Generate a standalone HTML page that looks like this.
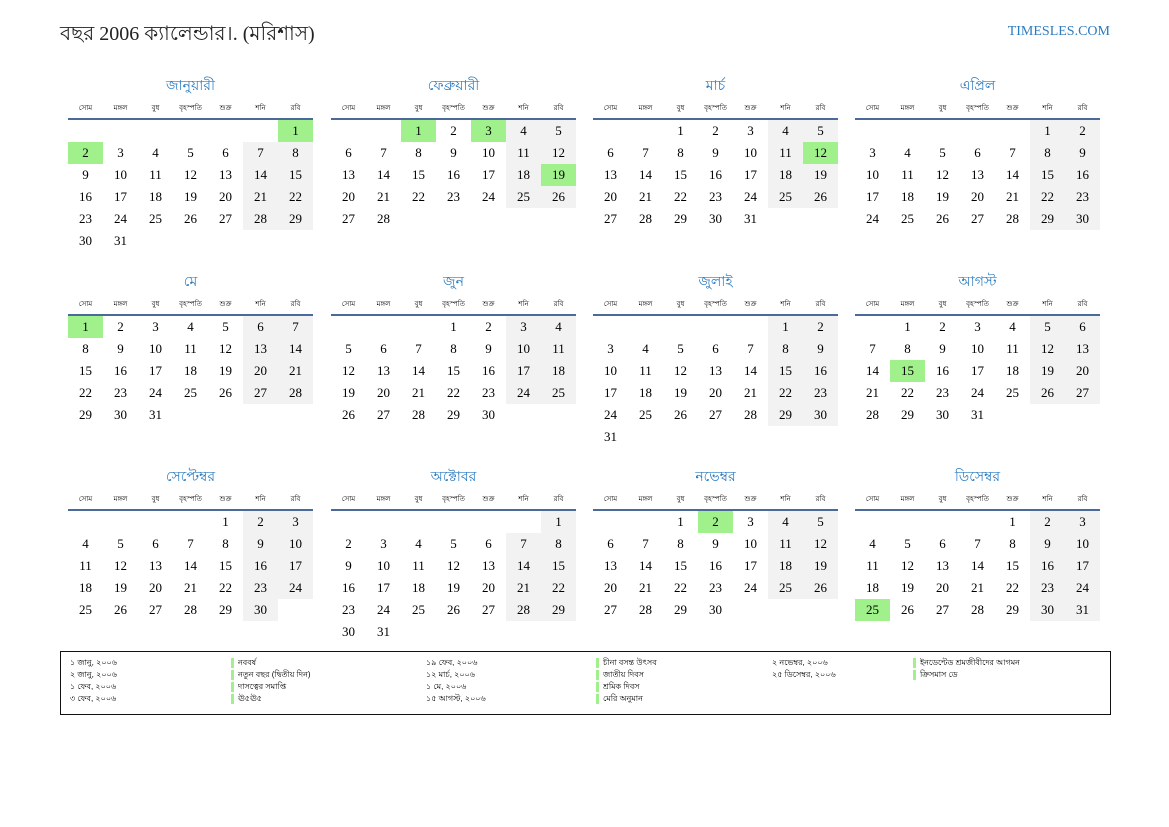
<!DOCTYPE html>
<html><head><meta charset="utf-8">
<style>
*{margin:0;padding:0;box-sizing:border-box}
body{width:1169px;height:827px;background:#fff;position:relative;font-family:"Liberation Serif","Noto Serif CJK SC",serif;color:#000;overflow:hidden}
.t{position:absolute;left:60px;top:19px;font-size:20px;color:#222;font-family:"Liberation Serif","Noto Sans CJK SC",serif}
.site{position:absolute;right:59px;top:24px;font-size:14px;color:#2a7bc0}
.m{position:absolute;width:245px}
.mt{height:25px;text-align:center;color:#2a7bc0;font-size:14px;line-height:28px}
.hd{display:grid;grid-template-columns:repeat(7,35px);height:20px;font-size:7px;text-align:center;line-height:22px;font-family:"Liberation Sans",sans-serif}
.ln{height:2px;background:#4a6a9a}
.g{display:grid;grid-template-columns:repeat(7,35px);grid-auto-rows:22px}
.g i{font-style:normal;text-align:center;line-height:22px;font-size:13px}
.g i:nth-child(7n+6),.g i:nth-child(7n){background:#f2f2f2}
.g i:empty{background:transparent!important}
.g i.h{background:#a0f08c!important}
.lg{position:absolute;left:60px;top:651px;width:1051px;height:64px;border:1.5px solid #111}
.c{position:absolute;top:5px;font-size:8px;line-height:12px;font-family:"Liberation Sans",sans-serif}
.c.n div{border-left:3px solid #a0f08c;padding-left:4px;margin-bottom:2px;line-height:10px}
.c.n{top:6px}
</style></head><body>
<div class="t">বছর 2006 ক্যালেন্ডার।. (মরিশাস)</div>
<div class="site">TIMESLES.COM</div>

<div class="m" style="left:68px;top:73px"><div class="mt">জানুয়ারী</div><div class="hd"><span>সোম</span><span>মঙ্গল</span><span>বুধ</span><span>বৃহস্পতি</span><span>শুক্র</span><span>শনি</span><span>রবি</span></div><div class="ln"></div>
<div class="g"><i></i><i></i><i></i><i></i><i></i><i></i><i class="h">1</i><i class="h">2</i><i>3</i><i>4</i><i>5</i><i>6</i><i>7</i><i>8</i><i>9</i><i>10</i><i>11</i><i>12</i><i>13</i><i>14</i><i>15</i><i>16</i><i>17</i><i>18</i><i>19</i><i>20</i><i>21</i><i>22</i><i>23</i><i>24</i><i>25</i><i>26</i><i>27</i><i>28</i><i>29</i><i>30</i><i>31</i></div></div>

<div class="m" style="left:331px;top:73px"><div class="mt">ফেব্রুয়ারী</div><div class="hd"><span>সোম</span><span>মঙ্গল</span><span>বুধ</span><span>বৃহস্পতি</span><span>শুক্র</span><span>শনি</span><span>রবি</span></div><div class="ln"></div>
<div class="g"><i></i><i></i><i class="h">1</i><i>2</i><i class="h">3</i><i>4</i><i>5</i><i>6</i><i>7</i><i>8</i><i>9</i><i>10</i><i>11</i><i>12</i><i>13</i><i>14</i><i>15</i><i>16</i><i>17</i><i>18</i><i class="h">19</i><i>20</i><i>21</i><i>22</i><i>23</i><i>24</i><i>25</i><i>26</i><i>27</i><i>28</i></div></div>

<div class="m" style="left:593px;top:73px"><div class="mt">মার্চ</div><div class="hd"><span>সোম</span><span>মঙ্গল</span><span>বুধ</span><span>বৃহস্পতি</span><span>শুক্র</span><span>শনি</span><span>রবি</span></div><div class="ln"></div>
<div class="g"><i></i><i></i><i>1</i><i>2</i><i>3</i><i>4</i><i>5</i><i>6</i><i>7</i><i>8</i><i>9</i><i>10</i><i>11</i><i class="h">12</i><i>13</i><i>14</i><i>15</i><i>16</i><i>17</i><i>18</i><i>19</i><i>20</i><i>21</i><i>22</i><i>23</i><i>24</i><i>25</i><i>26</i><i>27</i><i>28</i><i>29</i><i>30</i><i>31</i></div></div>

<div class="m" style="left:855px;top:73px"><div class="mt">এপ্রিল</div><div class="hd"><span>সোম</span><span>মঙ্গল</span><span>বুধ</span><span>বৃহস্পতি</span><span>শুক্র</span><span>শনি</span><span>রবি</span></div><div class="ln"></div>
<div class="g"><i></i><i></i><i></i><i></i><i></i><i>1</i><i>2</i><i>3</i><i>4</i><i>5</i><i>6</i><i>7</i><i>8</i><i>9</i><i>10</i><i>11</i><i>12</i><i>13</i><i>14</i><i>15</i><i>16</i><i>17</i><i>18</i><i>19</i><i>20</i><i>21</i><i>22</i><i>23</i><i>24</i><i>25</i><i>26</i><i>27</i><i>28</i><i>29</i><i>30</i></div></div>

<div class="m" style="left:68px;top:269px"><div class="mt">মে</div><div class="hd"><span>সোম</span><span>মঙ্গল</span><span>বুধ</span><span>বৃহস্পতি</span><span>শুক্র</span><span>শনি</span><span>রবি</span></div><div class="ln"></div>
<div class="g"><i class="h">1</i><i>2</i><i>3</i><i>4</i><i>5</i><i>6</i><i>7</i><i>8</i><i>9</i><i>10</i><i>11</i><i>12</i><i>13</i><i>14</i><i>15</i><i>16</i><i>17</i><i>18</i><i>19</i><i>20</i><i>21</i><i>22</i><i>23</i><i>24</i><i>25</i><i>26</i><i>27</i><i>28</i><i>29</i><i>30</i><i>31</i></div></div>

<div class="m" style="left:331px;top:269px"><div class="mt">জুন</div><div class="hd"><span>সোম</span><span>মঙ্গল</span><span>বুধ</span><span>বৃহস্পতি</span><span>শুক্র</span><span>শনি</span><span>রবি</span></div><div class="ln"></div>
<div class="g"><i></i><i></i><i></i><i>1</i><i>2</i><i>3</i><i>4</i><i>5</i><i>6</i><i>7</i><i>8</i><i>9</i><i>10</i><i>11</i><i>12</i><i>13</i><i>14</i><i>15</i><i>16</i><i>17</i><i>18</i><i>19</i><i>20</i><i>21</i><i>22</i><i>23</i><i>24</i><i>25</i><i>26</i><i>27</i><i>28</i><i>29</i><i>30</i></div></div>

<div class="m" style="left:593px;top:269px"><div class="mt">জুলাই</div><div class="hd"><span>সোম</span><span>মঙ্গল</span><span>বুধ</span><span>বৃহস্পতি</span><span>শুক্র</span><span>শনি</span><span>রবি</span></div><div class="ln"></div>
<div class="g"><i></i><i></i><i></i><i></i><i></i><i>1</i><i>2</i><i>3</i><i>4</i><i>5</i><i>6</i><i>7</i><i>8</i><i>9</i><i>10</i><i>11</i><i>12</i><i>13</i><i>14</i><i>15</i><i>16</i><i>17</i><i>18</i><i>19</i><i>20</i><i>21</i><i>22</i><i>23</i><i>24</i><i>25</i><i>26</i><i>27</i><i>28</i><i>29</i><i>30</i><i>31</i></div></div>

<div class="m" style="left:855px;top:269px"><div class="mt">আগস্ট</div><div class="hd"><span>সোম</span><span>মঙ্গল</span><span>বুধ</span><span>বৃহস্পতি</span><span>শুক্র</span><span>শনি</span><span>রবি</span></div><div class="ln"></div>
<div class="g"><i></i><i>1</i><i>2</i><i>3</i><i>4</i><i>5</i><i>6</i><i>7</i><i>8</i><i>9</i><i>10</i><i>11</i><i>12</i><i>13</i><i>14</i><i class="h">15</i><i>16</i><i>17</i><i>18</i><i>19</i><i>20</i><i>21</i><i>22</i><i>23</i><i>24</i><i>25</i><i>26</i><i>27</i><i>28</i><i>29</i><i>30</i><i>31</i></div></div>

<div class="m" style="left:68px;top:464px"><div class="mt">সেপ্টেম্বর</div><div class="hd"><span>সোম</span><span>মঙ্গল</span><span>বুধ</span><span>বৃহস্পতি</span><span>শুক্র</span><span>শনি</span><span>রবি</span></div><div class="ln"></div>
<div class="g"><i></i><i></i><i></i><i></i><i>1</i><i>2</i><i>3</i><i>4</i><i>5</i><i>6</i><i>7</i><i>8</i><i>9</i><i>10</i><i>11</i><i>12</i><i>13</i><i>14</i><i>15</i><i>16</i><i>17</i><i>18</i><i>19</i><i>20</i><i>21</i><i>22</i><i>23</i><i>24</i><i>25</i><i>26</i><i>27</i><i>28</i><i>29</i><i>30</i></div></div>

<div class="m" style="left:331px;top:464px"><div class="mt">অক্টোবর</div><div class="hd"><span>সোম</span><span>মঙ্গল</span><span>বুধ</span><span>বৃহস্পতি</span><span>শুক্র</span><span>শনি</span><span>রবি</span></div><div class="ln"></div>
<div class="g"><i></i><i></i><i></i><i></i><i></i><i></i><i>1</i><i>2</i><i>3</i><i>4</i><i>5</i><i>6</i><i>7</i><i>8</i><i>9</i><i>10</i><i>11</i><i>12</i><i>13</i><i>14</i><i>15</i><i>16</i><i>17</i><i>18</i><i>19</i><i>20</i><i>21</i><i>22</i><i>23</i><i>24</i><i>25</i><i>26</i><i>27</i><i>28</i><i>29</i><i>30</i><i>31</i></div></div>

<div class="m" style="left:593px;top:464px"><div class="mt">নভেম্বর</div><div class="hd"><span>সোম</span><span>মঙ্গল</span><span>বুধ</span><span>বৃহস্পতি</span><span>শুক্র</span><span>শনি</span><span>রবি</span></div><div class="ln"></div>
<div class="g"><i></i><i></i><i>1</i><i class="h">2</i><i>3</i><i>4</i><i>5</i><i>6</i><i>7</i><i>8</i><i>9</i><i>10</i><i>11</i><i>12</i><i>13</i><i>14</i><i>15</i><i>16</i><i>17</i><i>18</i><i>19</i><i>20</i><i>21</i><i>22</i><i>23</i><i>24</i><i>25</i><i>26</i><i>27</i><i>28</i><i>29</i><i>30</i></div></div>

<div class="m" style="left:855px;top:464px"><div class="mt">ডিসেম্বর</div><div class="hd"><span>সোম</span><span>মঙ্গল</span><span>বুধ</span><span>বৃহস্পতি</span><span>শুক্র</span><span>শনি</span><span>রবি</span></div><div class="ln"></div>
<div class="g"><i></i><i></i><i></i><i></i><i>1</i><i>2</i><i>3</i><i>4</i><i>5</i><i>6</i><i>7</i><i>8</i><i>9</i><i>10</i><i>11</i><i>12</i><i>13</i><i>14</i><i>15</i><i>16</i><i>17</i><i>18</i><i>19</i><i>20</i><i>21</i><i>22</i><i>23</i><i>24</i><i class="h">25</i><i>26</i><i>27</i><i>28</i><i>29</i><i>30</i><i>31</i></div></div>

<div class="lg">
<div class="c" style="left:9px"><div>১ জানু, ২০০৬</div><div>২ জানু, ২০০৬</div><div>১ ফেব, ২০০৬</div><div>৩ ফেব, ২০০৬</div></div>
<div class="c n" style="left:170px"><div>নববর্ষ</div><div>নতুন বছর (দ্বিতীয় দিন)</div><div>দাসত্বের সমাপ্তি</div><div>ঊ৫ঊ৫</div></div>
<div class="c" style="left:365px"><div>১৯ ফেব, ২০০৬</div><div>১২ মার্চ, ২০০৬</div><div>১ মে, ২০০৬</div><div>১৫ আগস্ট, ২০০৬</div></div>
<div class="c n" style="left:535px"><div>চীনা বসন্ত উৎসব</div><div>জাতীয় দিবস</div><div>শ্রমিক দিবস</div><div>মেরি অনুমান</div></div>
<div class="c" style="left:711px"><div>২ নভেম্বর, ২০০৬</div><div>২৫ ডিসেম্বর, ২০০৬</div></div>
<div class="c n" style="left:852px"><div>ইনডেন্টেড শ্রমজীবীদের আগমন</div><div>ক্রিসমাস ডে</div></div>
</div>
</body></html>
